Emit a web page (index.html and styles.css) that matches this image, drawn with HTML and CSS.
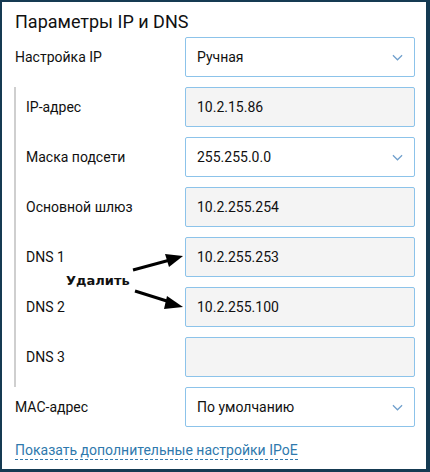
FILE: index.html
```html
<!DOCTYPE html>
<html lang="ru">
<head>
<meta charset="utf-8">
<link rel="stylesheet" href="styles.css">
</head>
<body>
<div class="panel">
  <h1 class="title">Параметры IP и DNS</h1>
  <div class="row">
    <span class="label">Настройка IP</span>
    <div class="box select">Ручная<svg class="chev" viewBox="0 0 12 7"><path d="M1 1l5 5 5-5" fill="none" stroke="#6f9fcc" stroke-width="1.3"/></svg></div>
  </div>
  <div class="group">
    <div class="row">
      <span class="label">IP-адрес</span>
      <div class="box input">10.2.15.86</div>
    </div>
    <div class="row">
      <span class="label">Маска подсети</span>
      <div class="box select">255.255.0.0<svg class="chev" viewBox="0 0 12 7"><path d="M1 1l5 5 5-5" fill="none" stroke="#6f9fcc" stroke-width="1.3"/></svg></div>
    </div>
    <div class="row">
      <span class="label">Основной шлюз</span>
      <div class="box input">10.2.255.254</div>
    </div>
    <div class="row">
      <span class="label">DNS 1</span>
      <div class="box input">10.2.255.253</div>
    </div>
    <div class="row">
      <span class="label">DNS 2</span>
      <div class="box input">10.2.255.100</div>
    </div>
    <div class="row">
      <span class="label">DNS 3</span>
      <div class="box input"></div>
    </div>
  </div>
  <div class="row">
    <span class="label">MAC-адрес</span>
    <div class="box select">По умолчанию<svg class="chev" viewBox="0 0 12 7"><path d="M1 1l5 5 5-5" fill="none" stroke="#6f9fcc" stroke-width="1.3"/></svg></div>
  </div>
  <a class="more">Показать дополнительные настройки IPoE</a>

  <div class="note">Удалить</div>
  <svg class="arrows" viewBox="0 0 430 472" width="430" height="472">
    <line x1="133" y1="270" x2="170" y2="260" stroke="#000" stroke-width="3"/>
    <polygon points="183,256 165,254 169,267" fill="#000"/>
    <line x1="135" y1="291" x2="170" y2="302" stroke="#000" stroke-width="3"/>
    <polygon points="183,307 167,296 164,309" fill="#000"/>
  </svg>
</div>
</body>
</html>
```
FILE: styles.css
```css
html, body {
  margin: 0;
  padding: 0;
  background: #fff;
}
.panel {
  position: relative;
  box-sizing: border-box;
  width: 430px;
  height: 472px;
  border-style: solid;
  border-color: #153a52;
  border-width: 2px 4px 3px 2px;
  padding: 0 11px 0 13px;
  font-family: Roboto, "Liberation Sans", sans-serif;
  font-size: 14px;
  color: #111;
  display: flex;
  flex-direction: column;
}
.title {
  margin: 0;
  height: 35px;
  line-height: 40px;
  font-size: 18px;
  font-weight: 400;
  color: #111;
}
.row {
  display: flex;
  align-items: center;
  justify-content: space-between;
  height: 40px;
}
.label {
  color: #111;
}
.box {
  box-sizing: border-box;
  width: 230px;
  height: 40px;
  border: 1px solid #8cc3ea;
  border-radius: 2px;
  padding: 0 11px;
  display: flex;
  align-items: center;
  justify-content: space-between;
  color: #111;
}
.input {
  background: #f4f4f4;
}
.select {
  background: #fff;
}
.chev {
  width: 11px;
  height: 7px;
}
.group {
  margin: 10px 0 0 -1px;
  padding: 0 0 10px 10px;
  border-left: 2px solid #cfcfcf;
  display: flex;
  flex-direction: column;
  gap: 10px;
}
.more {
  margin-top: 15px;
  align-self: flex-start;
  color: #2f79ad;
  text-decoration: none;
  border-bottom: 1px dashed #2f79ad;
  line-height: 16px;
  padding-bottom: 1px;
}
.note {
  position: absolute;
  left: 64px;
  top: 271px;
  font-family: "DejaVu Sans", Verdana, sans-serif;
  font-weight: bold;
  font-size: 13px;
  color: #111;
  letter-spacing: 0;
}
.arrows {
  position: absolute;
  left: -2px;
  top: -2px;
  pointer-events: none;
}
```
